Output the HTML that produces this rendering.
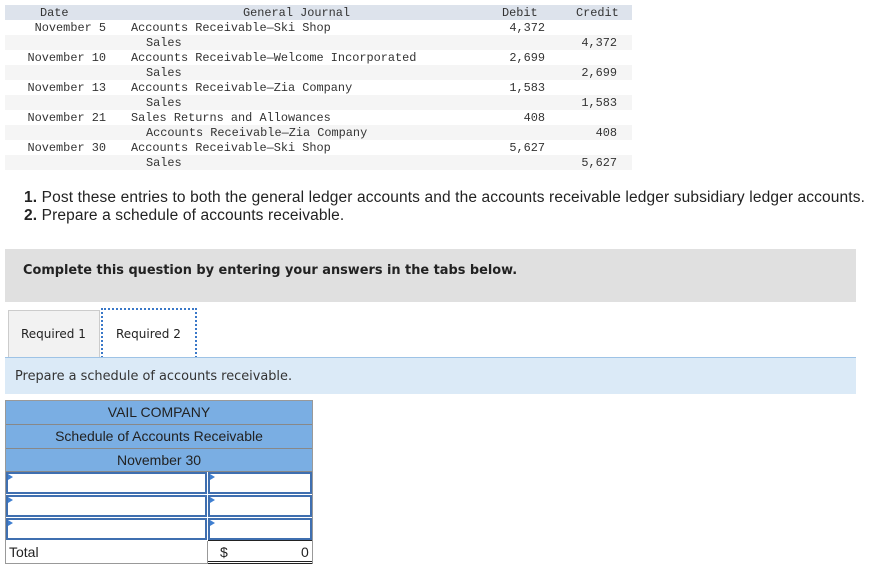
<!DOCTYPE html>
<html><head><meta charset="utf-8"><style>
*{margin:0;padding:0;box-sizing:border-box}
body{width:881px;height:567px;background:#fff;position:relative;overflow:hidden;font-family:"Liberation Sans",sans-serif;color:#222}
.m{font-family:"Liberation Mono",monospace;font-size:11.9px;color:#333}
.r{position:absolute;left:5px;width:627px;height:15px}
.t{position:absolute;top:1px;white-space:pre;line-height:14px}
.a{position:absolute;white-space:nowrap}
</style></head><body>
<div class="r m" style="top:5px;background:#dde3ec">
<span class="t" style="left:35px">Date</span><span class="t" style="left:238px">General Journal</span><span class="t" style="left:497px">Debit</span><span class="t" style="left:571px">Credit</span></div>
<div class="r m" style="top:20px"><span class="t" style="right:526px">November 5</span><span class="t" style="left:126px">Accounts Receivable—Ski Shop</span><span class="t" style="right:87px">4,372</span></div>
<div class="r m" style="top:35px;background:#f5f5f5"><span class="t" style="left:141px">Sales</span><span class="t" style="right:15px">4,372</span></div>
<div class="r m" style="top:50px"><span class="t" style="right:526px">November 10</span><span class="t" style="left:126px">Accounts Receivable—Welcome Incorporated</span><span class="t" style="right:87px">2,699</span></div>
<div class="r m" style="top:65px;background:#f5f5f5"><span class="t" style="left:141px">Sales</span><span class="t" style="right:15px">2,699</span></div>
<div class="r m" style="top:80px"><span class="t" style="right:526px">November 13</span><span class="t" style="left:126px">Accounts Receivable—Zia Company</span><span class="t" style="right:87px">1,583</span></div>
<div class="r m" style="top:95px;background:#f5f5f5"><span class="t" style="left:141px">Sales</span><span class="t" style="right:15px">1,583</span></div>
<div class="r m" style="top:110px"><span class="t" style="right:526px">November 21</span><span class="t" style="left:126px">Sales Returns and Allowances</span><span class="t" style="right:87px">408</span></div>
<div class="r m" style="top:125px;background:#f5f5f5"><span class="t" style="left:141px">Accounts Receivable—Zia Company</span><span class="t" style="right:15px">408</span></div>
<div class="r m" style="top:140px"><span class="t" style="right:526px">November 30</span><span class="t" style="left:126px">Accounts Receivable—Ski Shop</span><span class="t" style="right:87px">5,627</span></div>
<div class="r m" style="top:155px;background:#f5f5f5"><span class="t" style="left:141px">Sales</span><span class="t" style="right:15px">5,627</span></div>

<div class="a" style="left:24px;top:189px;font-size:15.5px;letter-spacing:0.13px"><b>1.</b> Post these entries to both the general ledger accounts and the accounts receivable ledger subsidiary ledger accounts.</div>
<div class="a" style="left:24px;top:207px;font-size:15.5px;letter-spacing:0.13px"><b>2.</b> Prepare a schedule of accounts receivable.</div>

<div class="a" style="left:5px;top:249px;width:851px;height:53px;background:#e0e0e0"></div>
<div class="a" style="left:23px;top:263px;font-weight:bold;font-family:'DejaVu Sans',sans-serif;font-size:12.9px">Complete this question by entering your answers in the tabs below.</div>

<div class="a" style="left:8px;top:310px;width:92px;height:48px;background:#f2f2f2;border:1px solid #ccc;border-bottom:none"></div>
<div class="a" style="left:21px;top:327px;font-family:'DejaVu Sans',sans-serif;font-size:12px">Required 1</div>
<div class="a" style="left:101px;top:308px;width:96px;height:50px;background:#fff;border:2px dotted #3a78c8;border-bottom:1px dashed #3a78c8"></div>
<div class="a" style="left:116px;top:327px;font-family:'DejaVu Sans',sans-serif;font-size:12px">Required 2</div>
<div class="a" style="left:5px;top:357px;width:851px;height:37px;background:#dbeaf7;border-top:1px solid #9ec3e6"></div>
<div class="a" style="left:15px;top:369px;font-family:'DejaVu Sans',sans-serif;font-size:12.9px;color:#333">Prepare a schedule of accounts receivable.</div>

<div class="a" style="left:5px;top:400px;width:308px;height:164px;border:1px solid #999">
<div style="height:24px;background:#7aaee3;border-bottom:1px solid #888;text-align:center;font-size:14px;line-height:23px;color:#222">VAIL COMPANY</div>
<div style="height:24px;background:#7aaee3;border-bottom:1px solid #888;text-align:center;font-size:14px;line-height:23px">Schedule of Accounts Receivable</div>
<div style="height:23px;background:#7aaee3;border-bottom:1px solid #888;text-align:center;font-size:14px;line-height:22px">November 30</div>
</div>
<div class="a" style="left:6px;top:472px;width:201px;height:22px;border:2px solid #3f6fb0"></div>
<div class="a" style="left:208px;top:472px;width:104px;height:22px;border:2px solid #3f6fb0"></div>
<div class="a" style="left:6px;top:495px;width:201px;height:22px;border:2px solid #3f6fb0"></div>
<div class="a" style="left:208px;top:495px;width:104px;height:22px;border:2px solid #3f6fb0"></div>
<div class="a" style="left:6px;top:518px;width:201px;height:22px;border:2px solid #3f6fb0"></div>
<div class="a" style="left:208px;top:518px;width:104px;height:22px;border:2px solid #3f6fb0"></div>
<div class="a" style="left:8px;top:474px;width:0;height:0;border-left:5px solid #3f7fd0;border-top:3px solid transparent;border-bottom:3px solid transparent"></div>
<div class="a" style="left:210px;top:474px;width:0;height:0;border-left:5px solid #3f7fd0;border-top:3px solid transparent;border-bottom:3px solid transparent"></div>
<div class="a" style="left:8px;top:497px;width:0;height:0;border-left:5px solid #3f7fd0;border-top:3px solid transparent;border-bottom:3px solid transparent"></div>
<div class="a" style="left:210px;top:497px;width:0;height:0;border-left:5px solid #3f7fd0;border-top:3px solid transparent;border-bottom:3px solid transparent"></div>
<div class="a" style="left:8px;top:520px;width:0;height:0;border-left:5px solid #3f7fd0;border-top:3px solid transparent;border-bottom:3px solid transparent"></div>
<div class="a" style="left:210px;top:520px;width:0;height:0;border-left:5px solid #3f7fd0;border-top:3px solid transparent;border-bottom:3px solid transparent"></div>
<div class="a" style="left:207px;top:541px;width:1px;height:22px;background:#999"></div>
<div class="a" style="left:208px;top:540px;width:104px;height:1px;background:#222"></div>
<div class="a" style="left:208px;top:561px;width:104px;height:3px;border-top:1px solid #222;border-bottom:1px solid #222"></div>
<div class="a" style="left:9px;top:544px;font-size:14px">Total</div>
<div class="a" style="left:220px;top:544px;font-size:14px">$</div>
<div class="a" style="left:301px;top:544px;font-size:14px">0</div>
</body></html>
